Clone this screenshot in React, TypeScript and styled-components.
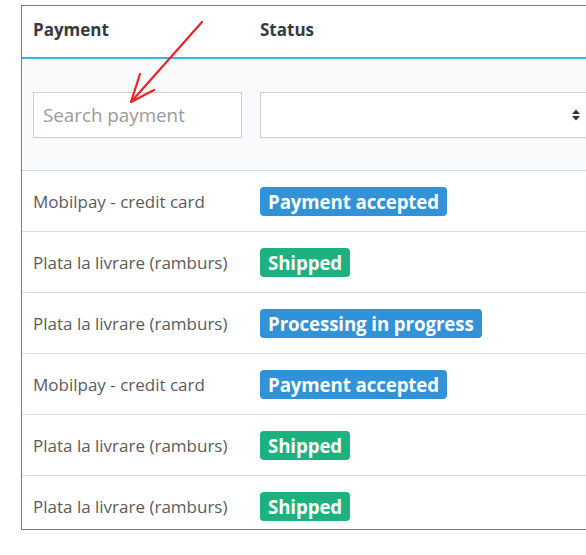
import React from 'react'
import styled, { createGlobalStyle } from 'styled-components'

const GlobalStyle = createGlobalStyle`
  html, body {
    margin: 0;
    padding: 0;
    background: #fff;
    overflow: hidden;
  }
  body {
    font-family: 'Open Sans', 'Noto Sans', sans-serif;
  }
`

const Page = styled.div`
  position: relative;
  width: 586px;
  height: 555px;
  padding: 5px 0 0 21px;
  box-sizing: border-box;
`

const Frame = styled.div`
  width: 580px;
  height: 525px;
  box-sizing: border-box;
  overflow: hidden;
  border: 1px solid #7a7a7a;
  border-right: none;
  background: #fff;
`

const Row = styled.div<{ $h: number; $line?: string; $bg?: string }>`
  display: grid;
  grid-template-columns: 228px 1fr;
  align-items: center;
  height: ${(p) => p.$h}px;
  background: ${(p) => p.$bg || '#fff'};
  border-bottom: ${(p) => p.$line || 'none'};
`

const Cell = styled.div<{ $first?: boolean }>`
  padding: ${(p) => (p.$first ? '0 8px 0 11px' : '0 10px 0 10px')};
  display: flex;
  align-items: center;
`

const HeadText = styled.span`
  font-weight: 700;
  font-size: 17px;
  color: #363a41;
  margin-top: -4px;
`

const BodyText = styled.span`
  font-size: 17px;
  color: #5b5b5b;
`

const SearchInput = styled.input`
  width: 100%;
  height: 46px;
  box-sizing: border-box;
  border: 1px solid #c9cfd3;
  background: #fff;
  padding: 0 9px;
  font-family: inherit;
  font-size: 18.8px;
  color: #333;
  outline: none;

  &::placeholder {
    color: #9a9a9a;
  }
`

const SelectBox = styled.div`
  width: 100%;
  height: 46px;
  box-sizing: border-box;
  border: 1px solid #c9cfd3;
  background: #fff;
  display: flex;
  align-items: center;
  justify-content: flex-end;
  padding-right: 9px;
`

const Badge = styled.span<{ $tone: 'info' | 'success' }>`
  display: inline-block;
  background: ${(p) => (p.$tone === 'info' ? '#3192d8' : '#1bb27f')};
  color: #fff;
  font-weight: 700;
  font-size: 18.7px;
  line-height: 29px;
  height: 29px;
  padding: 0 8px;
  border-radius: 4px;
  letter-spacing: -0.1px;
`

const Arrow = styled.svg`
  position: absolute;
  left: 0;
  top: 0;
  pointer-events: none;
`

const orders: { payment: string; status: string; tone: 'info' | 'success' }[] = [
  { payment: 'Mobilpay - credit card', status: 'Payment accepted', tone: 'info' },
  { payment: 'Plata la livrare (ramburs)', status: 'Shipped', tone: 'success' },
  { payment: 'Plata la livrare (ramburs)', status: 'Processing in progress', tone: 'info' },
  { payment: 'Mobilpay - credit card', status: 'Payment accepted', tone: 'info' },
  { payment: 'Plata la livrare (ramburs)', status: 'Shipped', tone: 'success' },
  { payment: 'Plata la livrare (ramburs)', status: 'Shipped', tone: 'success' },
]

const Caret = () => (
  <svg width="10" height="14" viewBox="0 0 10 14">
    <path d="M1 6 L5 1.5 L9 6 Z" fill="#333" />
    <path d="M1 8 L5 12.5 L9 8 Z" fill="#333" />
  </svg>
)

export default function App() {
  return (
    <Page>
      <GlobalStyle />
      <Frame>
        <Row $h={51} $line="2px solid #3ab7d2">
          <Cell $first>
            <HeadText>Payment</HeadText>
          </Cell>
          <Cell>
            <HeadText>Status</HeadText>
          </Cell>
        </Row>
        <Row $h={111} $bg="#f9fafb" $line="1px solid #d6dadd">
          <Cell $first>
            <SearchInput placeholder="Search payment" />
          </Cell>
          <Cell>
            <SelectBox>
              <Caret />
            </SelectBox>
          </Cell>
        </Row>
        {orders.map((o, i) => (
          <Row key={i} $h={60} $line="1px solid #d5dfe3">
            <Cell $first>
              <BodyText>{o.payment}</BodyText>
            </Cell>
            <Cell>
              <Badge $tone={o.tone}>{o.status}</Badge>
            </Cell>
          </Row>
        ))}
      </Frame>
      <Arrow width="586" height="555" viewBox="0 0 586 555">
        <g stroke="#e8242a" strokeWidth="2.2" fill="none" strokeLinecap="round" strokeLinejoin="round">
          <path d="M202 22 L131 102" />
          <path d="M140 74 L131 102 L154 90" />
        </g>
      </Arrow>
    </Page>
  )
}
